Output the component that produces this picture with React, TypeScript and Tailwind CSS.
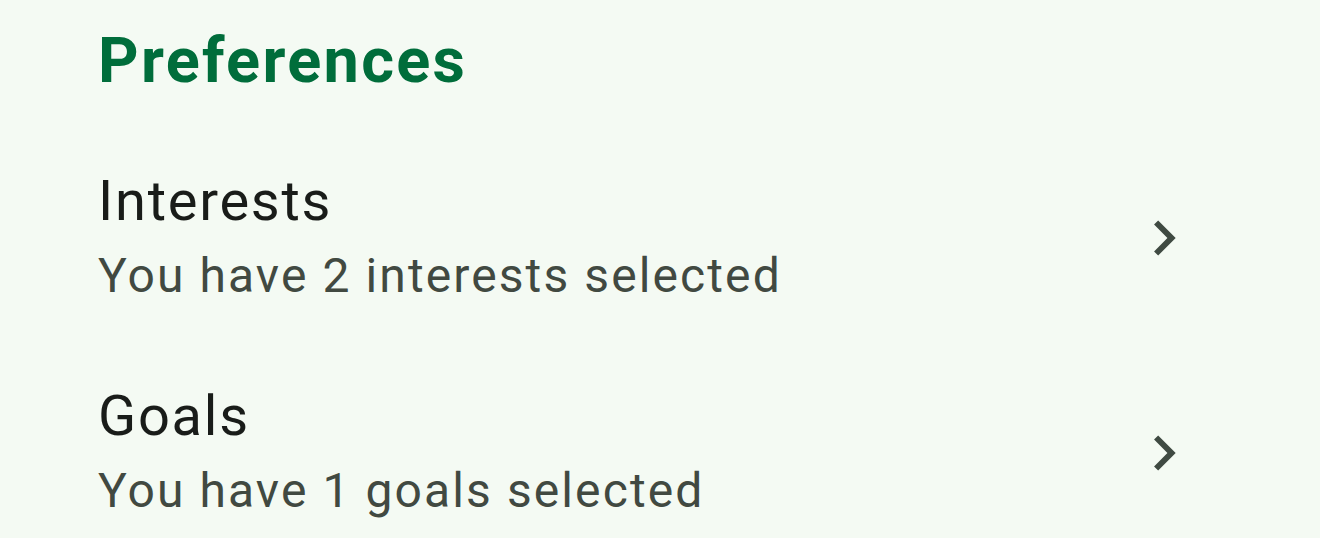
import React from "react";

function Chevron() {
  return (
    <svg width="70" height="70" viewBox="0 0 24 24" className="shrink-0">
      <path d="M10 6L8.59 7.41 13.17 12l-4.58 4.59L10 18l6-6z" fill="#3f4a42" />
    </svg>
  );
}

function Row({ title, subtitle }: { title: string; subtitle: string }) {
  return (
    <div className="flex h-[215px] items-center pl-[98px] pr-[121px]">
      <div className="flex flex-1 flex-col">
        <div className="text-[56px] leading-[76px] tracking-[1.75px] text-[#191c19]">{title}</div>
        <div className="text-[48px] leading-[73px] tracking-[2.1px] text-[#414941]">{subtitle}</div>
      </div>
      <Chevron />
    </div>
  );
}

export default function App() {
  return (
    <div className="h-[538px] w-[1320px] overflow-hidden bg-[#f4faf3]" style={{ fontFamily: "Roboto, 'Noto Sans', sans-serif" }}>
      <div className="pl-[98px] pt-[19px] pb-[27px] text-[63px] font-bold leading-[84px] tracking-[2.3px] text-[#006d3b]">Preferences</div>
      <Row title="Interests" subtitle="You have 2 interests selected" />
      <Row title="Goals" subtitle="You have 1 goals selected" />
    </div>
  );
}
